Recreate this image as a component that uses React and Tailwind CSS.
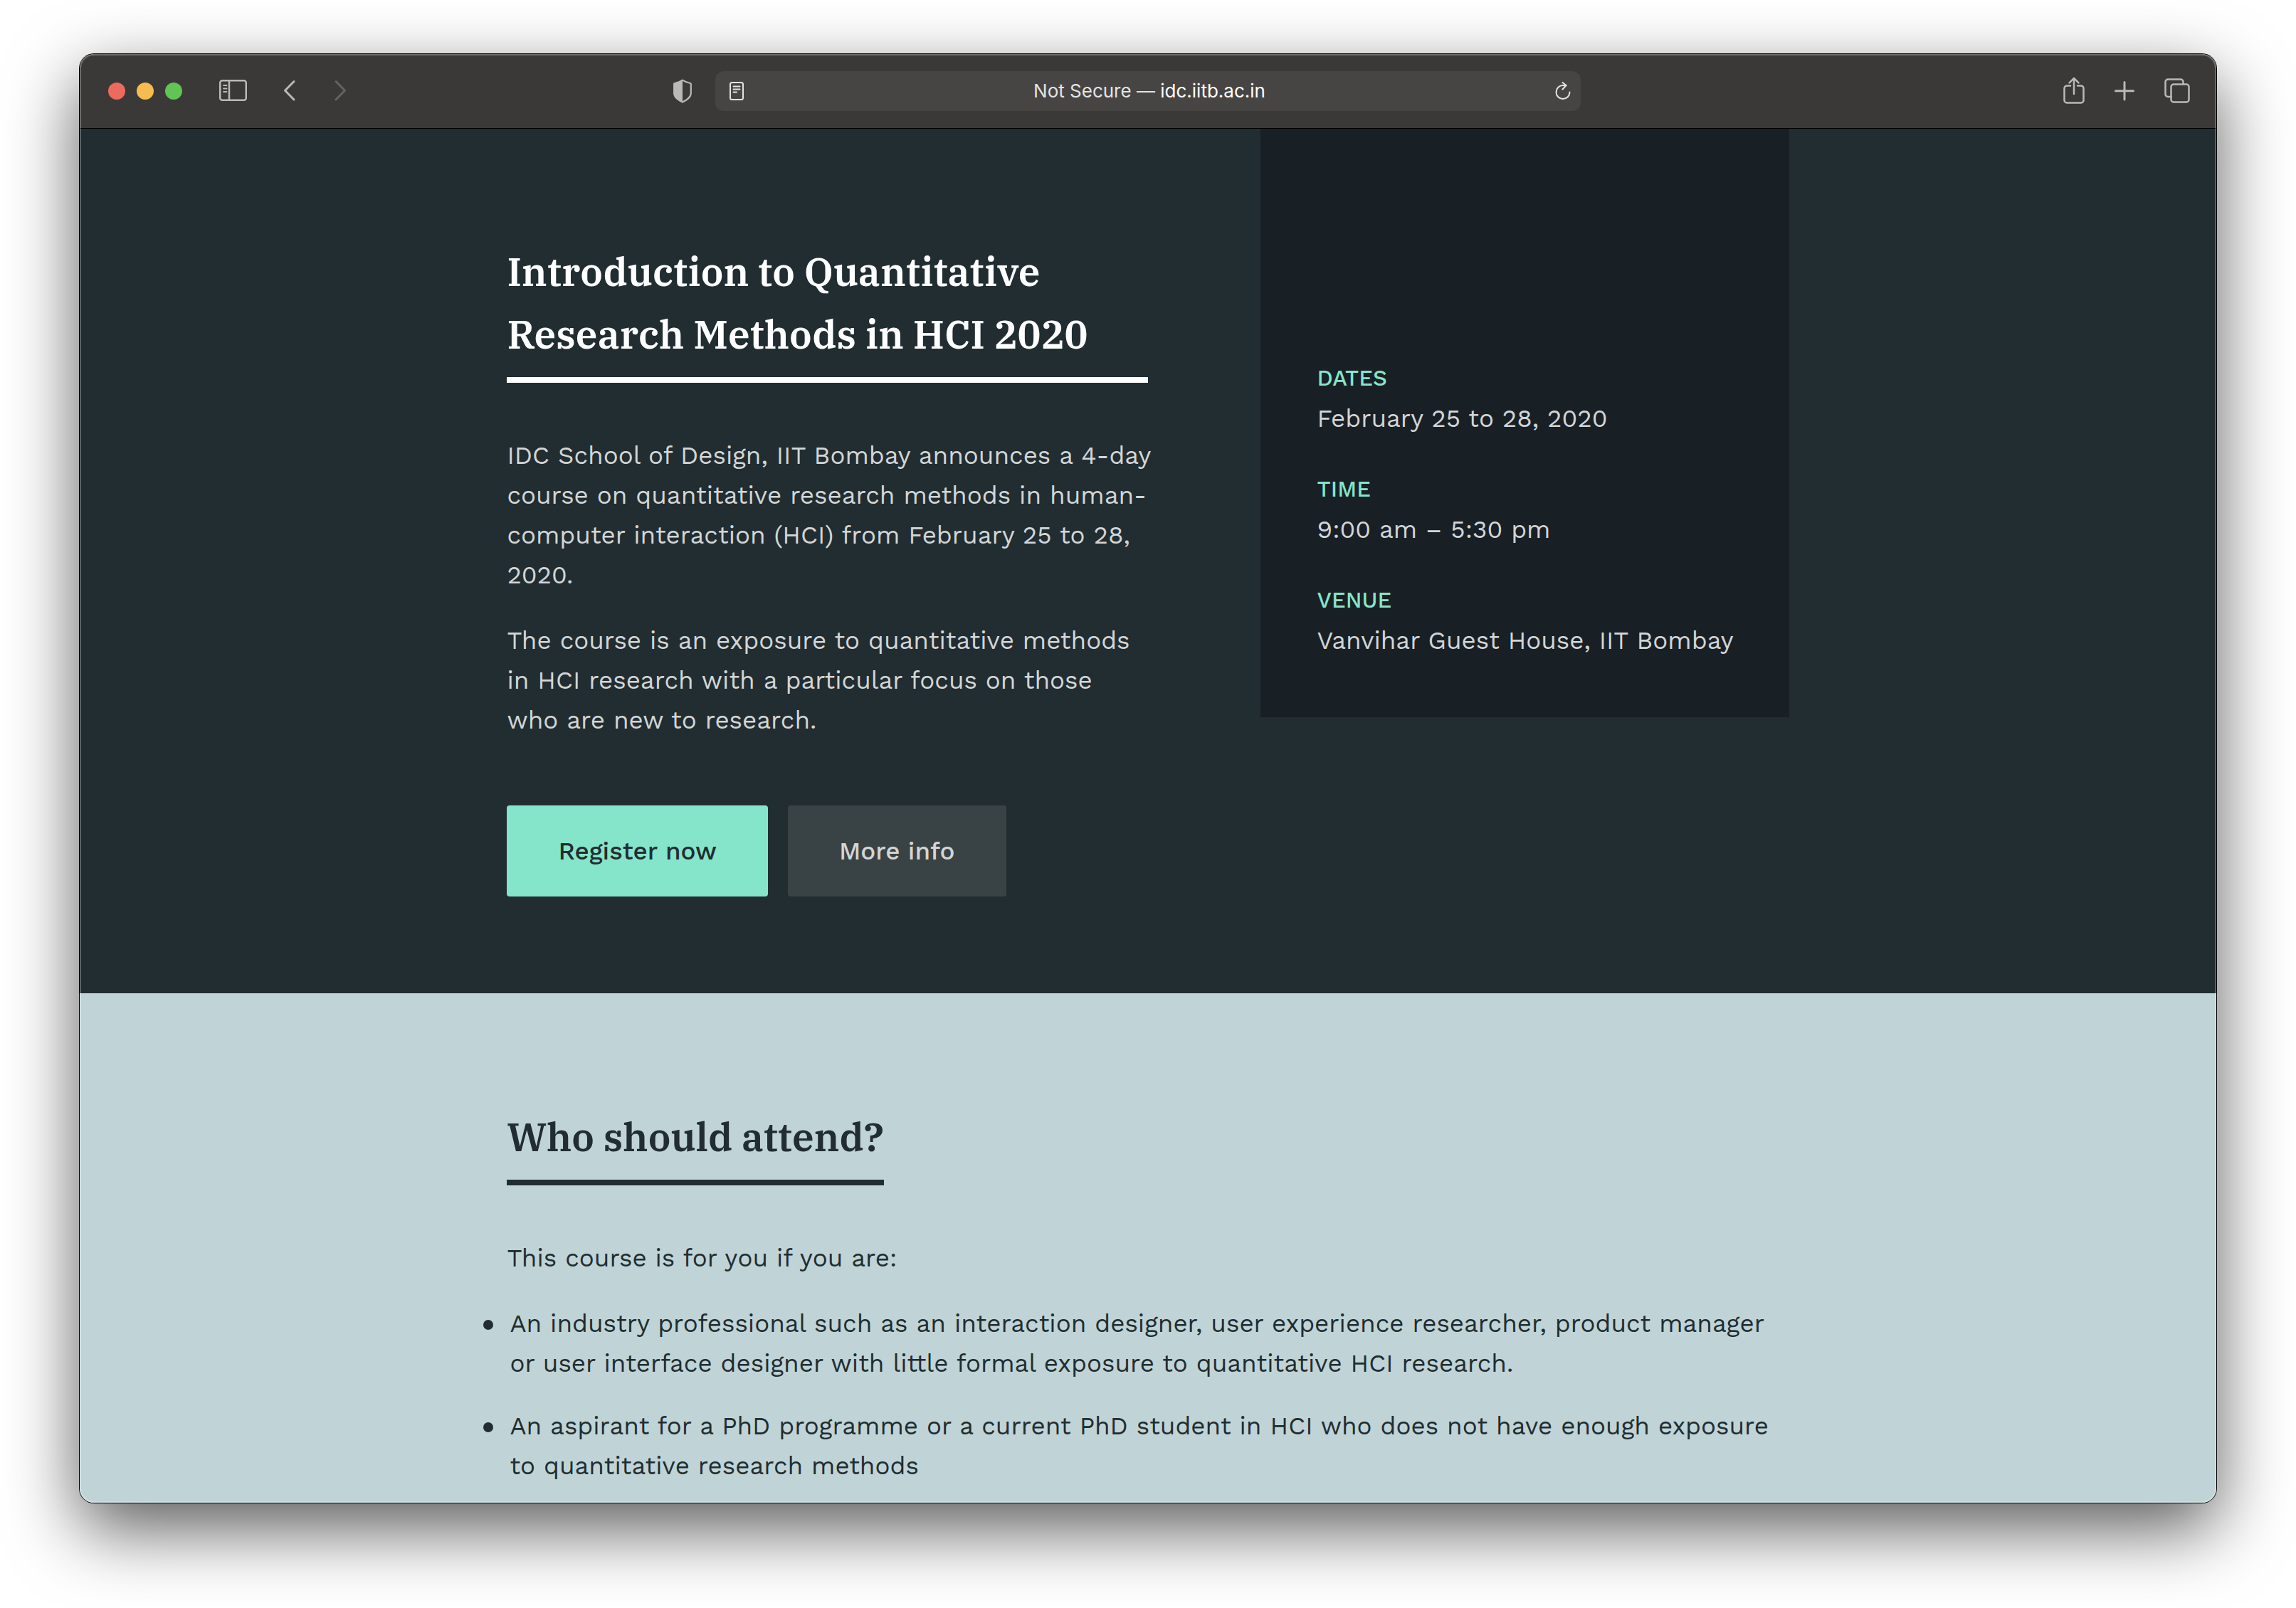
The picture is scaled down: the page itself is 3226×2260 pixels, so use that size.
const stroke = {
  fill: 'none',
  stroke: 'currentColor',
  strokeWidth: 2.5,
  strokeLinecap: 'round',
  strokeLinejoin: 'round',
};

function SidebarIcon() {
  return (
    <svg width="40" height="32" viewBox="0 0 40 32" {...stroke} aria-hidden="true">
      <rect x="1.25" y="1.25" width="36.5" height="27.5" rx="3" />
      <path d="M14 1.500v27" />
      <path d="M6 8h4.500M6 12.500h4.500M6 17h4.500" strokeWidth="1.800" />
    </svg>
  );
}

function ChevronLeft() {
  return (
    <svg width="18" height="32" viewBox="0 0 18 32" {...stroke} strokeWidth="3" aria-hidden="true">
      <path d="M15 2.500 2.500 15.200 15 28" />
    </svg>
  );
}

function ChevronRight() {
  return (
    <svg width="18" height="32" viewBox="0 0 18 32" {...stroke} strokeWidth="3" aria-hidden="true">
      <path d="M3 2.500 15.500 15.200 3 28" />
    </svg>
  );
}

function ShieldIcon() {
  return (
    <svg width="28" height="34" viewBox="0 0 28 34" aria-hidden="true">
      <path
        d="M14 1.600c3.600 2.400 7 3.700 11 4.400.5.1.8.4.8.9v12.600c0 6.400-5.300 9.800-11.800 13C7.500 29.300 2.200 25.900 2.200 19.500V6.900c0-.5.3-.8.8-.9 4-.7 7.400-2 11-4.400Z"
        fill="none"
        stroke="currentColor"
        strokeWidth="2.200"
        strokeLinejoin="round"
      />
      <path d="M14 1v32C7 29.500 1.500 26 1.500 19.500V6.500C6 5.800 10 4 14 1Z" fill="currentColor" />
    </svg>
  );
}

function ReaderIcon() {
  return (
    <svg width="20" height="26" viewBox="0 0 20 26" {...stroke} strokeWidth="2" aria-hidden="true">
      <rect x="1" y="1" width="18" height="24" rx="2.500" />
      <path d="M5.500 6.500h9M5.500 10.500h9M5.500 14.500h4.500" />
    </svg>
  );
}

function ReloadIcon() {
  return (
    <svg width="22" height="26" viewBox="0 0 22 26" {...stroke} strokeWidth="2" aria-hidden="true">
      <path d="M20.500 14.500a9.500 9.500 0 1 1-9.500-9.500h4.500" />
      <path d="m10.500 1 5 4-5 5.500" />
    </svg>
  );
}

function ShareIcon() {
  return (
    <svg width="30" height="40" viewBox="0 0 30 40" {...stroke} aria-hidden="true">
      <path d="M10 12.500H5A3.500 3.500 0 0 0 1.500 16v17A3.500 3.500 0 0 0 5 36.500h20a3.500 3.500 0 0 0 3.500-3.500V16a3.500 3.500 0 0 0-3.500-3.500h-5" />
      <path d="M15 24V2M8.500 8.300 15 1.800l6.500 6.500" />
    </svg>
  );
}

function PlusIcon() {
  return (
    <svg width="28" height="28" viewBox="0 0 28 28" {...stroke} strokeWidth="3" aria-hidden="true">
      <path d="M14 1.500v24.500M1.500 13.700h25" />
    </svg>
  );
}

function TabsIcon() {
  return (
    <svg width="36" height="36" viewBox="0 0 36 36" {...stroke} aria-hidden="true">
      <rect x="9.500" y="8.500" width="25" height="25" rx="3.500" />
      <path d="M9.500 26H5a3.500 3.500 0 0 1-3.500-3.500V5A3.500 3.500 0 0 1 5 1.500h18A3.500 3.500 0 0 1 26.500 5v3.500" />
    </svg>
  );
}

function Toolbar() {
  return (
    <header className="grid h-[105px] grid-cols-[1fr_1216px_1fr] items-center border-b border-black bg-[#3a3937] text-[#bbb9b7]">
      <div className="flex items-center pr-8 pl-10">
        <div className="flex gap-4">
          <button aria-label="Close" className="size-6 rounded-full bg-[#ed6a5f]" />
          <button aria-label="Minimise" className="size-6 rounded-full bg-[#f5bd4f]" />
          <button aria-label="Zoom" className="size-6 rounded-full bg-[#61c454]" />
        </div>
        <button aria-label="Show sidebar" className="ml-[52px]"><SidebarIcon /></button>
        <button aria-label="Back" className="ml-[50px]"><ChevronLeft /></button>
        <button aria-label="Forward" className="ml-[53px] text-[#646361]"><ChevronRight /></button>
        <button aria-label="Privacy report" className="ml-auto"><ShieldIcon /></button>
      </div>
      <div className="flex h-14 items-center justify-between rounded-xl bg-[#464543] pr-3.5 pl-5 text-[#e4e3e2]">
        <button aria-label="Show reader"><ReaderIcon /></button>
        <p className="text-[26px] leading-8">
          Not Secure — <span className="text-white">idc.iitb.ac.in</span>
        </p>
        <button aria-label="Reload"><ReloadIcon /></button>
      </div>
      <div className="flex items-center justify-end gap-[42px] pr-[37px]">
        <button aria-label="Share"><ShareIcon /></button>
        <button aria-label="New tab"><PlusIcon /></button>
        <button aria-label="Show all tabs"><TabsIcon /></button>
      </div>
    </header>
  );
}

const details = [
  ['Dates', 'February 25 to 28, 2020'],
  ['Time', '9:00 am – 5:30 pm'],
  ['Venue', 'Vanvihar Guest House, IIT Bombay'],
];

const heading =
  "border-b-8 pb-4 font-['IBM_Plex_Serif','Liberation_Serif',serif] text-[55px] leading-[88px] font-semibold";

function Hero() {
  return (
    <section className="bg-[#212d31] text-[#d3d5d6]">
      <div className="mx-auto flex w-3/5 items-start justify-between pb-[136px]">
        <div className="w-1/2 pt-[157px] whitespace-nowrap">
          <h1 className={`${heading} border-white text-white`}>
            Introduction to Quantitative
            <br />
            Research Methods in HCI 2020
          </h1>
          <p className="mt-[74px]">
            IDC School of Design, IIT Bombay announces a 4-day
            <br />
            course on quantitative research methods in human-
            <br />
            computer interaction (HCI) from February 25 to 28,
            <br />
            2020.
          </p>
          <p className="mt-9">
            The course is an exposure to quantitative methods
            <br />
            in HCI research with a particular focus on those
            <br />
            who are new to research.
          </p>
          <div className="mt-[92px] flex gap-7 font-medium">
            <a href="#register" className="rounded-sm bg-[#85e5ca] px-[72px] py-9 text-[#212d31]">
              Register now
            </a>
            <a href="#info" className="rounded-sm bg-[#394244] px-[72px] py-9">
              More info
            </a>
          </div>
        </div>
        <dl className="flex w-[743px] flex-col gap-11 bg-[#182026] px-20 pt-[323px] pb-20 whitespace-nowrap">
          {details.map(([label, value]) => (
            <div key={label}>
              <dt className="text-[31px] font-medium text-[#85e5ca] uppercase">{label}</dt>
              <dd>{value}</dd>
            </div>
          ))}
        </dl>
      </div>
    </section>
  );
}

function Audience() {
  return (
    <section className="bg-[#c0d4d7] text-[#212d31]">
      <div className="mx-auto w-3/5 pt-[158px] pb-6">
        <h2 className={`${heading} w-fit border-[#212d31]`}>Who should attend?</h2>
        <p className="mt-[74px]">This course is for you if you are:</p>
        <ul className="mt-9 flex flex-col gap-8 pl-1 whitespace-nowrap">
          <li className="relative before:absolute before:top-[23px] before:-left-[37px] before:size-3.5 before:rounded-full before:bg-[#212d31]">
            An industry professional such as an interaction designer, user experience researcher, product manager
            <br />
            or user interface designer with little formal exposure to quantitative HCI research.
          </li>
          <li className="relative before:absolute before:top-[23px] before:-left-[37px] before:size-3.5 before:rounded-full before:bg-[#212d31]">
            An aspirant for a PhD programme or a current PhD student in HCI who does not have enough exposure
            <br />
            to quantitative research methods
          </li>
        </ul>
      </div>
    </section>
  );
}

export default function App() {
  return (
    <div className="bg-white px-28 pt-[76px] pb-[148px] font-['Inter',sans-serif]">
      <div className="relative rounded-[20px] shadow-[0_0_0_1px_#000,0_36px_100px_rgba(0,0,0,0.65)]">
        <div className="overflow-hidden rounded-[20px]">
          <Toolbar />
          <main className="font-['Work_Sans','Inter',sans-serif] text-[35px] leading-[56px]">
            <Hero />
            <Audience />
          </main>
        </div>
        <div className="pointer-events-none absolute inset-0 rounded-[20px] shadow-[inset_0_0_0_2px_rgba(255,255,255,0.25)]" />
      </div>
    </div>
  );
}
